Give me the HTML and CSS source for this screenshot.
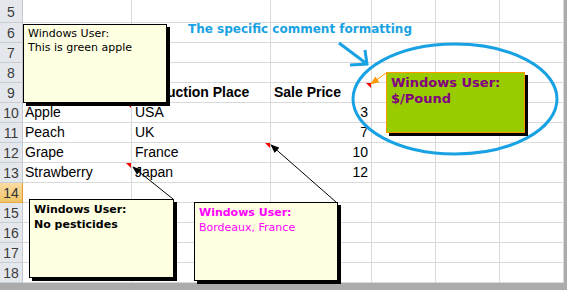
FILE: index.html
```html
<!DOCTYPE html>
<html lang="en">
<head>
    <meta charset="UTF-8">
    <meta name="viewport" content="width=device-width, initial-scale=1.0">
    <title>Comment Formatting</title>
    <link rel="stylesheet" href="styles.css">
</head>
<body>
    <div class="sheet">
        <div class="grid">
            <div class="row first"><div class="rh">5</div><div class="c"></div><div class="c"></div><div class="c"></div><div class="c"></div><div class="c"></div><div class="c"></div></div>
            <div class="row"><div class="rh">6</div><div class="c"></div><div class="c"></div><div class="c"></div><div class="c"></div><div class="c"></div><div class="c"></div></div>
            <div class="row"><div class="rh">7</div><div class="c"></div><div class="c"></div><div class="c"></div><div class="c"></div><div class="c"></div><div class="c"></div></div>
            <div class="row"><div class="rh">8</div><div class="c"></div><div class="c"></div><div class="c"></div><div class="c"></div><div class="c"></div><div class="c"></div></div>
            <div class="row"><div class="rh">9</div><div class="c head">Fruit</div><div class="c head">Production Place</div><div class="c head flag">Sale Price</div><div class="c"></div><div class="c"></div><div class="c"></div></div>
            <div class="row"><div class="rh">10</div><div class="c flag">Apple</div><div class="c">USA</div><div class="c num">3</div><div class="c"></div><div class="c"></div><div class="c"></div></div>
            <div class="row"><div class="rh">11</div><div class="c">Peach</div><div class="c">UK</div><div class="c num">7</div><div class="c"></div><div class="c"></div><div class="c"></div></div>
            <div class="row"><div class="rh">12</div><div class="c">Grape</div><div class="c flag">France</div><div class="c num">10</div><div class="c"></div><div class="c"></div><div class="c"></div></div>
            <div class="row"><div class="rh">13</div><div class="c flag">Strawberry</div><div class="c">Japan</div><div class="c num">12</div><div class="c"></div><div class="c"></div><div class="c"></div></div>
            <div class="row"><div class="rh active">14</div><div class="c"></div><div class="c"></div><div class="c"></div><div class="c"></div><div class="c"></div><div class="c"></div></div>
            <div class="row"><div class="rh">15</div><div class="c"></div><div class="c"></div><div class="c"></div><div class="c"></div><div class="c"></div><div class="c"></div></div>
            <div class="row"><div class="rh">16</div><div class="c"></div><div class="c"></div><div class="c"></div><div class="c"></div><div class="c"></div><div class="c"></div></div>
            <div class="row"><div class="rh">17</div><div class="c"></div><div class="c"></div><div class="c"></div><div class="c"></div><div class="c"></div><div class="c"></div></div>
            <div class="row"><div class="rh">18</div><div class="c"></div><div class="c"></div><div class="c"></div><div class="c"></div><div class="c"></div><div class="c"></div></div>
        </div>

        <!-- callout lines, the ellipse and the blue arrow -->
        <svg class="marks" width="567" height="290" viewBox="0 0 567 290">
            <defs>
                <marker id="tip" markerUnits="userSpaceOnUse" markerWidth="9" markerHeight="7" refX="8" refY="3.5" orient="auto">
                    <path d="M0,0 L9,3.5 L0,7 z" fill="#000"/>
                </marker>
                <marker id="tip-orange" markerUnits="userSpaceOnUse" markerWidth="9" markerHeight="7" refX="8" refY="3.5" orient="auto">
                    <path d="M0,0 L9,3.5 L0,7 z" fill="#ff9900"/>
                </marker>
            </defs>
            <line x1="150" y1="96" x2="132" y2="103" stroke="#000" stroke-width="1" marker-end="url(#tip)"/>
            <line x1="173" y1="199" x2="133" y2="167" stroke="#000" stroke-width="1" marker-end="url(#tip)"/>
            <line x1="336" y1="202" x2="271" y2="145" stroke="#000" stroke-width="1" marker-end="url(#tip)"/>
            <line x1="386" y1="73" x2="371" y2="84" stroke="#ff9900" stroke-width="1" marker-end="url(#tip-orange)"/>
            <ellipse cx="455" cy="99" rx="102" ry="55" fill="none" stroke="#19a2e3" stroke-width="3"/>
            <path d="M339,43 L367,64 M365,50 L367,64 L350,65" fill="none" stroke="#19a2e3" stroke-width="3"/>
        </svg>

        <div class="title">The specific comment formatting</div>

        <div class="note note-apple">
            Windows User:<br>This is green apple
        </div>
        <div class="note note-price">
            Windows User:<br>$/Pound
        </div>
        <div class="note note-straw">
            Windows User:<br>No pesticides
        </div>
        <div class="note note-place">
            <b>Windows User:</b><br>Bordeaux, France
        </div>
    </div>
</body>
</html>
```

FILE: styles.css
```css
body { margin: 0; background: #ababab; font-family: "Liberation Sans", Arial, sans-serif; }
.sheet { position: relative; width: 567px; height: 290px; overflow: hidden; }
.grid { width: 564px; background: #fff; }
.row { display: grid; grid-template-columns: 23px 109px 139px 101px 64px 64px 64px; height: 20px; }
.row.first { height: 23px; }
.rh { background: #e4e7ec; border-right: 1px solid #c3c8d0; border-bottom: 1px solid #c9ced6; color: #3c3c3c; font-size: 14px; display: flex; align-items: center; justify-content: center; padding-top: 1px; box-sizing: border-box; }
.rh.active { background: linear-gradient(#f9dca4, #f1c467); border-bottom-color: #e9a93c; border-right-color: #e29b34; color: #333; }
.c { position: relative; border-right: 1px solid #d9d9d9; border-bottom: 1px solid #d9d9d9; font-size: 14px; line-height: 19px; padding: 0 3px; white-space: nowrap; color: #000; box-sizing: border-box; }
.row .c:nth-child(2) { padding-left: 2px; }
.c.head { font-weight: bold; }
.c.num { text-align: right; }
.c.flag::after { content: ""; position: absolute; top: 0; right: 0; border-top: 5px solid #ff0000; border-left: 5px solid transparent; }

.marks { position: absolute; left: 0; top: 0; }

.title { position: absolute; left: 188px; top: 22px; color: #19a2e3; font-family: "DejaVu Sans", sans-serif; font-size: 12px; font-weight: bold; }

.note { position: absolute; box-sizing: border-box; background: #ffffe1; border: 1px solid #000; box-shadow: 3px 3px 0 #000; font-family: "DejaVu Sans", sans-serif; font-size: 11px; line-height: 14px; padding: 2px 4px; color: #000; }
.note-apple { left: 23px; top: 24px; width: 144px; height: 79px; }
.note-straw { left: 29px; top: 199px; width: 145px; height: 79px; font-weight: bold; line-height: 15px; }
.note-place { left: 194px; top: 202px; width: 144px; height: 79px; color: #ff00ff; line-height: 15px; }
.note-price { left: 386px; top: 72px; width: 139px; height: 61px; background: #99cc00; border-color: #ff9900; color: #800080; font-weight: bold; font-size: 13px; line-height: 16px; }
```
